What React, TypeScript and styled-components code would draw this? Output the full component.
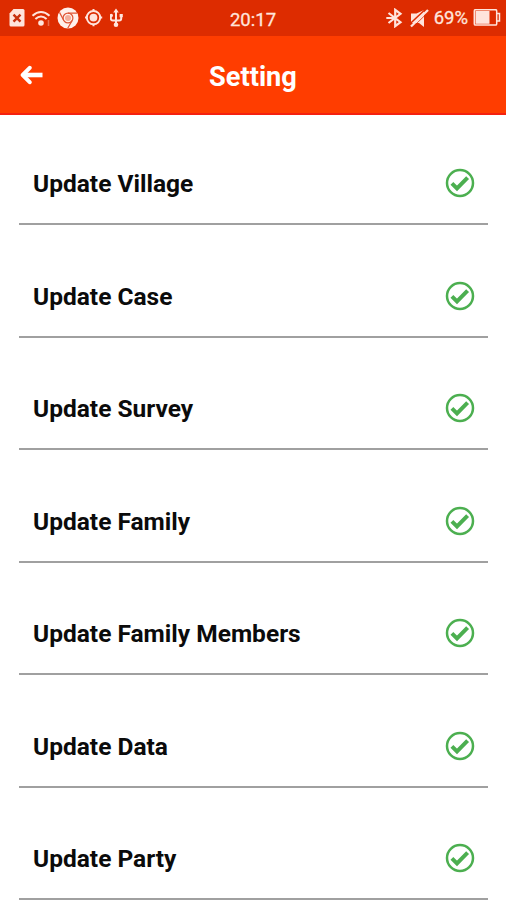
import React from "react";
import styled, { createGlobalStyle } from "styled-components";

const GlobalStyle = createGlobalStyle`
  * { box-sizing: border-box; }
  body { margin: 0; background: #fff; font-family: Roboto, sans-serif; overflow: hidden; }
`;

const Screen = styled.main`
  width: 506px;
  height: 900px;
  overflow: hidden;
  background: #fff;
`;

const StatusBar = styled.div`
  display: grid;
  grid-template-columns: 1fr auto 1fr;
  align-items: center;
  height: 36px;
  padding: 0 5px 0 8px;
  background: #dd2c00;
  color: #ffe4dc;
`;

const StatusGroup = styled.div<{ $end?: boolean }>`
  display: flex;
  align-items: center;
  gap: ${(p) => (p.$end ? 5 : 6)}px;
  justify-content: ${(p) => (p.$end ? "flex-end" : "flex-start")};
`;

const StatusText = styled.span`
  font-size: 18.5px;
  line-height: 36px;
  height: 36px;
  -webkit-text-stroke: 0.3px currentColor;
`;

const Clock = styled(StatusText)`
  margin-right: 3px;
  padding-top: 2px;
`;

const Icon = styled.svg`
  display: block;
  flex: none;
  fill: none;
  stroke: currentColor;
`;

const Header = styled.header`
  display: grid;
  grid-template-columns: 60px 1fr 60px;
  align-items: center;
  height: 79px;
  padding-bottom: 1px;
  background: #ff3d00;
  border-bottom: 2px solid #f5210f;
  color: #fff;
`;

const BackButton = styled.button`
  display: flex;
  padding: 2px 0 0 19px;
  border: 0;
  background: none;
  color: inherit;
`;

const Title = styled.h1`
  margin: 5px 0 0;
  text-align: center;
  font-size: 27.2px;
  line-height: 32px;
  font-weight: 700;
`;

const List = styled.ul`
  margin: 0;
  padding: 0 18px 0 19px;
  list-style: none;
`;

const Row = styled.li`
  display: flex;
  align-items: center;
  justify-content: space-between;
  height: 112.5px;
  padding: 30px 13px 0 14px;
  border-bottom: 2px solid #a0a0a0;

  &:first-child {
    height: 110.3px;
    padding-top: 28px;
  }
`;

const Label = styled.span`
  padding-top: 2px;
  font-size: 24.5px;
  line-height: 30px;
  font-weight: 700;
  color: #0b0b0b;
`;

const SimIcon = () => (
  <Icon width="17" height="20" viewBox="0 0 17 20" stroke="none">
    <path d="M5.5 1H15a1.5 1.5 0 0 1 1.5 1.5v14.600a1.500 1.500 0 0 1-1.500 1.500H3a1.500 1.500 0 0 1-1.500-1.500V5.500Z" fill="currentColor" stroke="none" />
    <path d="m5.500 6.700 7 7m0-7-7 7" stroke="#c83210" strokeWidth="2.400" />
  </Icon>
);

const WifiIcon = () => (
  <Icon width="20" height="18" viewBox="0 0 20 18" strokeWidth="2.100">
    <path d="M1.500 6.700Q10-.7 18.500 6.700" />
    <path d="M4.400 10Q10 5 15.600 10" />
    <circle cx="10" cy="14" r="2.800" fill="currentColor" stroke="none" />
    <path d="M17.500 11v6" opacity=".35" strokeWidth="1.500" />
  </Icon>
);

const ChromeIcon = () => (
  <Icon width="22" height="22" viewBox="0 0 22 22">
    <circle cx="11" cy="11" r="10.500" fill="#fff0eb" stroke="none" />
    <g stroke="#df5535" strokeWidth="1.200">
      <circle cx="11" cy="11" r="4.900" />
      <path d="M11 6.100h9.200M6.800 13.500 2.500 5.400M15.200 13.500l-4.500 7.800" />
    </g>
    <circle cx="11" cy="11" r="3" fill="#f3ad9a" stroke="none" />
  </Icon>
);

const LocationIcon = () => (
  <Icon width="19" height="19" viewBox="1 0.9 19 19">
    <circle cx="9.500" cy="9.500" r="6.700" strokeWidth="2" />
    <circle cx="9.500" cy="9.500" r="3.900" fill="currentColor" stroke="none" />
    <path d="M9.500 .8v2.400m0 12.600v2.400M.8 9.500h2.400m12.600 0h2.400" strokeWidth="2" />
  </Icon>
);

const UsbIcon = () => (
  <Icon width="16" height="20" viewBox="2 0 16 20" strokeWidth="2">
    <path d="M8 3v13M2.800 8v2.500q0 2 2 2h6.400q2 0 2-2V8" />
    <path d="m8 .5 2.800 4H5.200Z" fill="currentColor" stroke="none" />
    <circle cx="8" cy="16.700" r="2.300" fill="currentColor" stroke="none" />
    <circle cx="3.300" cy="7.500" r="1.700" fill="currentColor" stroke="none" />
    <path d="M11.600 6h3.200v3.200h-3.200Z" fill="currentColor" stroke="none" />
  </Icon>
);

const BluetoothIcon = () => (
  <Icon width="18" height="20" viewBox="0 0 18 20" strokeWidth="2.200">
    <path d="m2.500 5 12 9.200-5.300 4V1.800l5.300 4L2.500 15" />
    <path d="M.3 10h9" strokeWidth="2" />
  </Icon>
);

const MuteIcon = () => (
  <Icon width="20" height="20" viewBox="-0.5 0 20 20">
    <path d="M1.500 5.500h5.500L14.500 2v17L9.500 15H1.500Z" fill="currentColor" stroke="none" />
    <path d="M.5 15.800 16.500 .8" stroke="#dd2c00" strokeWidth="1.500" />
    <path d="m1.500 18.500 17-16.500" strokeWidth="2.300" />
    <path d="M4 18.500 16 6.800" stroke="#dd2c00" strokeWidth=".8" />
  </Icon>
);

const BatteryIcon = () => (
  <Icon width="28" height="18" viewBox="0 1 28 18">
    <rect x="1.300" y="1.700" width="22.400" height="15.400" rx="1.200" strokeWidth="1.500" />
    <rect x="2.500" y="3" width="14" height="12.800" fill="currentColor" stroke="none" />
    <path d="M24 5.500h2.500v7.500H24" strokeWidth="1.500" />
  </Icon>
);

const BackIcon = () => (
  <Icon width="26" height="20" viewBox="0 0 26 20" strokeWidth="4" strokeLinecap="round">
    <path d="M23.500 10H5" strokeLinecap="butt" strokeWidth="4.600" />
    <path d="M10.700 2.800 3.700 10l7 7.200" strokeLinejoin="round" />
  </Icon>
);

const CheckIcon = () => (
  <Icon width="30" height="30" viewBox="0 0 30 30" color="#4caf50">
    <circle cx="15" cy="15" r="13" strokeWidth="2.500" />
    <path d="m6.900 15.300 5.100 5.100L22.600 9.700" strokeWidth="4" />
  </Icon>
);

const items = ["Village", "Case", "Survey", "Family", "Family Members", "Data", "Party"];

export default function App() {
  return (
    <Screen>
      <GlobalStyle />
      <StatusBar>
        <StatusGroup>
          <SimIcon />
          <WifiIcon />
          <ChromeIcon />
          <LocationIcon />
          <UsbIcon />
        </StatusGroup>
        <Clock>20:17</Clock>
        <StatusGroup $end>
          <BluetoothIcon />
          <MuteIcon />
          <StatusText>69%</StatusText>
          <BatteryIcon />
        </StatusGroup>
      </StatusBar>
      <Header>
        <BackButton aria-label="Back">
          <BackIcon />
        </BackButton>
        <Title>Setting</Title>
      </Header>
      <List>
        {items.map((item) => (
          <Row key={item}>
            <Label>Update {item}</Label>
            <CheckIcon />
          </Row>
        ))}
      </List>
    </Screen>
  );
}
